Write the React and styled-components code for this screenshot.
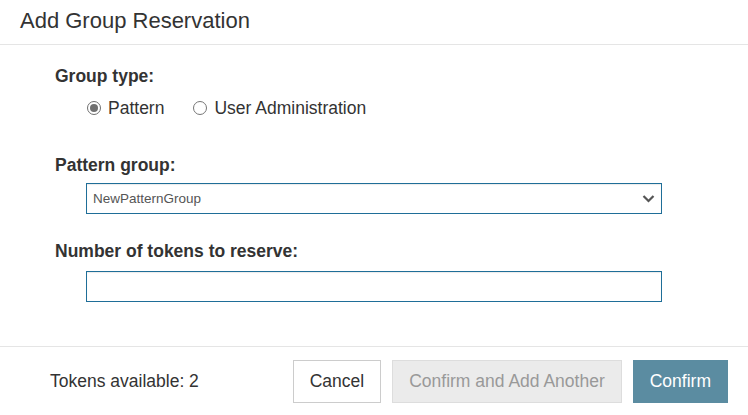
import React from 'react'
import styled, { createGlobalStyle } from 'styled-components'

const Global = createGlobalStyle`
    body {
        margin: 0;
        background: #fff;
        font-family: "Liberation Sans", Arial, sans-serif;
        color: #333;
    }
`

const Dialog = styled.div`
    width: 748px;
    height: 415px;
    display: flex;
    flex-direction: column;
`

const Header = styled.div`
    height: 45px;
    box-sizing: border-box;
    padding: 7px 20px 0;
    border-bottom: 1px solid #e5e5e5;
    font-size: 22px;
    line-height: 28px;
    color: #333;
`

const Body = styled.div`
    flex: 1;
    padding: 21px 55px 0;
`

const Label = styled.div`
    font-size: 17.5px;
    font-weight: 700;
    line-height: 20px;
    color: #333;
    margin-top: ${p => p.top || 0}px;
`

const RadioRow = styled.div`
    display: flex;
    align-items: center;
    gap: 29px;
    margin: 12px 0 0 32px;
    font-size: 17.5px;
    line-height: 20px;
`

const RadioOption = styled.label`
    display: flex;
    align-items: center;
    gap: 7px;
`

const Circle = styled.span`
    width: 14px;
    height: 14px;
    box-sizing: border-box;
    border-radius: 50%;
    border: 1px solid ${p => (p.checked ? '#6f6f6f' : '#767676')};
    display: flex;
    align-items: center;
    justify-content: center;
    &::after {
        content: '';
        width: 8px;
        height: 8px;
        border-radius: 50%;
        background: ${p => (p.checked ? '#707070' : 'transparent')};
    }
`

const Field = styled.div`
    margin: ${p => p.top || 8}px 0 0 31px;
    width: 576px;
    height: 31px;
    box-sizing: border-box;
    border: 1px solid #1f6e98;
    box-shadow: inset 0 1px 1px rgba(0, 0, 0, 0.08);
    display: flex;
    align-items: center;
    justify-content: space-between;
    padding: 0 6px;
    font-size: 13.5px;
    color: #555;
`

const Chevron = () => (
    <svg width="13" height="9" viewBox="0 0 13 9">
        <path d="M1.5 2 L6.5 7 L11.5 2" fill="none" stroke="#555" strokeWidth="2.2" />
    </svg>
)

const Footer = styled.div`
    height: 69px;
    box-sizing: border-box;
    border-top: 1px solid #e5e5e5;
    display: flex;
    align-items: center;
    padding: 0 20px 0 50px;
    font-size: 17.5px;
`

const Available = styled.span`
    flex: 1;
    color: #333;
`

const Button = styled.button`
    height: 43px;
    margin-left: 11px;
    padding: 0 16px;
    font-family: "Liberation Sans", Arial, sans-serif;
    font-size: 17.5px;
    border: 1px solid ${p => p.border};
    background: ${p => p.bg};
    color: ${p => p.fg};
    cursor: pointer;
`

export default function App() {
    return (
        <Dialog>
            <Global />
            <Header>Add Group Reservation</Header>
            <Body>
                <Label>Group type:</Label>
                <RadioRow>
                    <RadioOption><Circle checked />Pattern</RadioOption>
                    <RadioOption><Circle />User Administration</RadioOption>
                </RadioRow>
                <Label top={37}>Pattern group:</Label>
                <Field>
                    NewPatternGroup
                    <Chevron />
                </Field>
                <Label top={27}>Number of tokens to reserve:</Label>
                <Field top={10} />
            </Body>
            <Footer>
                <Available>Tokens available: 2</Available>
                <Button bg="#fff" border="#ccc" fg="#333">Cancel</Button>
                <Button bg="#ebebeb" border="#ddd" fg="#999">Confirm and Add Another</Button>
                <Button bg="#5b8ca1" border="#5b8ca1" fg="#fff">Confirm</Button>
            </Footer>
        </Dialog>
    )
}
